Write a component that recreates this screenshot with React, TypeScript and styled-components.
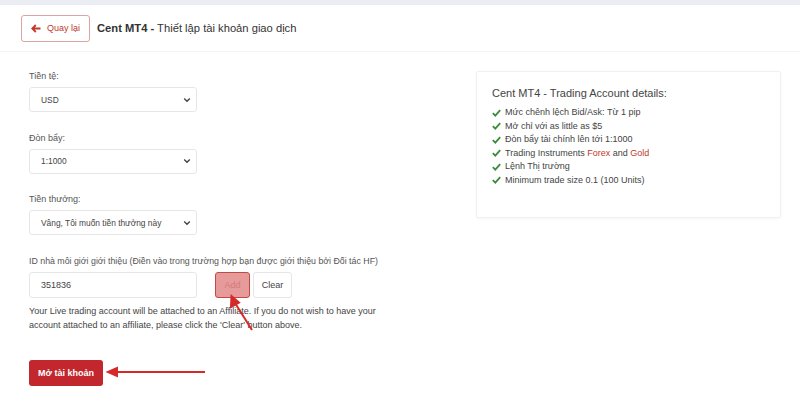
import styled, { createGlobalStyle } from 'styled-components';

const GlobalStyle = createGlobalStyle`
  html, body {
    margin: 0;
    padding: 0;
    background: #ebedf5;
    font-family: "Liberation Sans", Arial, sans-serif;
  }
`;

const features = [
  { text: 'Mức chênh lệch Bid/Ask: Từ 1 pip' },
  { text: 'Mở chỉ với as little as $5' },
  { text: 'Đòn bẩy tài chính lên tới 1:1000' },
  { text: 'Trading Instruments ', forex: true },
  { text: 'Lệnh Thị trường' },
  { text: 'Minimum trade size 0.1 (100 Units)' },
];

const Page = styled.div`
  position: relative;
  margin-top: 5px;
  width: 800px;
  height: 403px;
  background: #fff;
  overflow: hidden;
`;

const Header = styled.div`
  display: flex;
  align-items: center;
  gap: 7px;
  height: 47px;
  padding: 0 21px;
  box-sizing: border-box;
  border-bottom: 1px solid #f3f3f5;
`;

const BackButton = styled.button`
  display: flex;
  align-items: center;
  gap: 6px;
  height: 27px;
  padding: 0 9px 0 9px;
  border: 1px solid #dca4a4;
  border-radius: 3px;
  background: #fff;
  color: #c0392b;
  font-family: inherit;
  font-size: 9px;
`;

const Title = styled.div`
  font-size: 11.2px;
  color: #333;
  b {
    font-weight: bold;
  }
`;

const Body = styled.div`
  display: flex;
  justify-content: space-between;
  padding: 18px 19px 0 29px;
`;

const Form = styled.div`
  display: flex;
  flex-direction: column;
  width: 380px;
`;

const Field = styled.div`
  display: flex;
  flex-direction: column;
  margin-bottom: 19.5px;
`;

const Label = styled.label<{ $small?: boolean }>`
  font-size: ${({ $small }) => ($small ? '8.8px' : '9px')};
  line-height: 12px;
  color: #555;
  margin-bottom: 5px;
  white-space: nowrap;
`;

const SelectBox = styled.div`
  display: flex;
  align-items: center;
  justify-content: space-between;
  width: 168px;
  height: 25px;
  box-sizing: border-box;
  padding: 0 5px 0 11px;
  border: 1px solid #e6e6e6;
  border-radius: 3px;
  font-size: 8.4px;
  color: #444;
`;

const InputRow = styled.div`
  display: flex;
  align-items: center;
  gap: 3px;
`;

const TextInput = styled.div`
  display: flex;
  align-items: center;
  width: 168px;
  height: 26px;
  box-sizing: border-box;
  padding: 0 11px;
  border: 1px solid #e6e6e6;
  border-radius: 3px;
  font-size: 9px;
  color: #444;
  margin-right: 15px;
`;

const SmallButton = styled.div<{ $variant: 'add' | 'clear' }>`
  display: flex;
  align-items: center;
  justify-content: center;
  height: 26px;
  box-sizing: border-box;
  padding: 0 9px;
  border-radius: 3px;
  font-size: 9px;
  border: 1px solid ${({ $variant }) => ($variant === 'add' ? '#c04a4a' : '#e6e6e6')};
  background: ${({ $variant }) => ($variant === 'add' ? '#e69a9a' : '#fff')};
  color: ${({ $variant }) => ($variant === 'add' ? '#d57a7a' : '#444')};
  width: ${({ $variant }) => ($variant === 'add' ? '35px' : '39px')};
`;

const Note = styled.p`
  margin: 6px 0 0;
  font-size: 9px;
  line-height: 14px;
  color: #444;
`;

const SubmitButton = styled.div`
  align-self: flex-start;
  display: flex;
  align-items: center;
  height: 26px;
  padding: 0 9px;
  margin-top: 28px;
  border-radius: 3px;
  background: #c1272d;
  color: #fff;
  font-weight: bold;
  font-size: 9px;
`;

const DetailsCard = styled.div`
  width: 305px;
  height: 147px;
  box-sizing: border-box;
  margin-top: 1px;
  padding: 15px 15px;
  border: 1px solid #eef0f3;
  border-radius: 2px;
  box-shadow: 0 1px 3px rgba(0, 0, 0, 0.04);
`;

const CardTitle = styled.div`
  font-size: 11px;
  color: #444;
  margin-bottom: 7px;
`;

const FeatureList = styled.ul`
  list-style: none;
  margin: 0;
  padding: 0;
`;

const FeatureItem = styled.li`
  display: flex;
  align-items: center;
  gap: 4px;
  font-size: 9px;
  line-height: 13.5px;
  color: #444;
`;

const Red = styled.span`
  color: #c0392b;
`;

const Overlay = styled.svg`
  position: absolute;
  left: 0;
  top: 0;
  pointer-events: none;
`;

const Chevron = () => (
  <svg width="8" height="6" viewBox="0 0 8 6">
    <path d="M1.2 1.5 L4 4.3 L6.8 1.5" fill="none" stroke="#444" strokeWidth="1.4" />
  </svg>
);

const Check = () => (
  <svg width="9" height="8" viewBox="0 0 9 8">
    <path d="M0.8 4.2 L3.3 6.6 L8.2 1.2" fill="none" stroke="#3d8b3d" strokeWidth="1.8" />
  </svg>
);

export default function App() {
  return (
    <>
      <GlobalStyle />
      <Page>
        <Header>
          <BackButton>
            <svg width="10" height="9" viewBox="0 0 10 9">
              <path d="M9.5 4.5 H1.5 M4.8 1 L1.3 4.5 L4.8 8" fill="none" stroke="#c0392b" strokeWidth="1.8" />
            </svg>
            Quay lại
          </BackButton>
          <Title>
            <b>Cent MT4 -</b> Thiết lập tài khoản giao dịch
          </Title>
        </Header>
        <Body>
          <Form>
            <Field>
              <Label>Tiền tệ:</Label>
              <SelectBox>
                USD
                <Chevron />
              </SelectBox>
            </Field>
            <Field>
              <Label>Đòn bẩy:</Label>
              <SelectBox>
                1:1000
                <Chevron />
              </SelectBox>
            </Field>
            <Field>
              <Label>Tiền thưởng:</Label>
              <SelectBox>
                Vâng, Tôi muốn tiền thưởng này
                <Chevron />
              </SelectBox>
            </Field>
            <Label $small>ID nhà môi giới giới thiệu (Điền vào trong trường hợp bạn được giới thiệu bởi Đối tác HF)</Label>
            <InputRow>
              <TextInput>351836</TextInput>
              <SmallButton $variant="add">Add</SmallButton>
              <SmallButton $variant="clear">Clear</SmallButton>
            </InputRow>
            <Note>
              Your Live trading account will be attached to an Affiliate. If you do not wish to have your
              <br />
              account attached to an affiliate, please click the 'Clear' button above.
            </Note>
            <SubmitButton>Mở tài khoản</SubmitButton>
          </Form>
          <DetailsCard>
            <CardTitle>Cent MT4 - Trading Account details:</CardTitle>
            <FeatureList>
              {features.map(f => (
                <FeatureItem key={f.text}>
                  <Check />
                  <span>
                    {f.text}
                    {f.forex && (
                      <>
                        <Red>Forex</Red> and <Red>Gold</Red>
                      </>
                    )}
                  </span>
                </FeatureItem>
              ))}
            </FeatureList>
          </DetailsCard>
        </Body>
        <Overlay width="800" height="403" viewBox="0 0 800 403">
          <g stroke="#d42a2a" strokeWidth="2" fill="#d42a2a">
            <line x1="252" y1="325" x2="235" y2="298" />
            <path d="M231.5 291 L231 302 L239 297.5 Z" />
            <line x1="205" y1="367" x2="115" y2="367" />
            <path d="M108 367 L117 363 L117 371 Z" />
          </g>
        </Overlay>
      </Page>
    </>
  );
}
